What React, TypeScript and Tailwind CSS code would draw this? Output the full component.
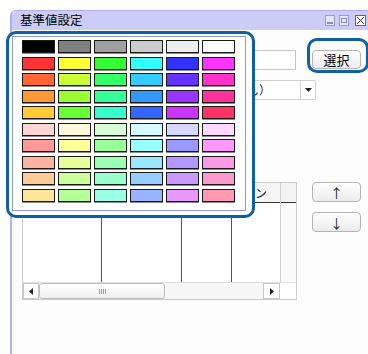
import React from "react";

const palette: string[][] = [
  ["#000000", "#808080", "#a0a0a0", "#cccccc", "#eeeeee", "#ffffff"],
  ["#ff3333", "#ffff33", "#33ff33", "#33ffff", "#3333ff", "#ff33ff"],
  ["#ff6633", "#ccff33", "#33ff66", "#33ccff", "#6633ff", "#ff33cc"],
  ["#ff9933", "#99ff33", "#33ff99", "#3399ff", "#9933ff", "#ff3399"],
  ["#ffcc33", "#66ff33", "#33ffcc", "#3366ff", "#cc33ff", "#ff3366"],
  ["#ffd5d5", "#fffadb", "#d8fbd8", "#d5faff", "#d8d8ff", "#ffd8ff"],
  ["#ff9999", "#ffff99", "#99ff99", "#99ffff", "#9999ff", "#ff99ff"],
  ["#ffb3a0", "#e6ff99", "#99ffb3", "#99e6ff", "#b399ff", "#ff99e6"],
  ["#ffcc99", "#ccff99", "#99ffcc", "#99ccff", "#cc99ff", "#ff99cc"],
  ["#ffe699", "#b3ff99", "#99ffe6", "#99b3ff", "#e699ff", "#ff99b3"],
];

const font = { fontFamily: '"Noto Sans CJK JP", "Noto Sans", sans-serif' };

function WinButton({ children }: { children: React.ReactNode }) {
  return (
    <div className="w-[10px] h-[11px] border border-[#9a9acc] bg-[#e4e5fa] flex items-center justify-center">
      {children}
    </div>
  );
}

export default function App() {
  return (
    <div className="relative w-[368px] h-[354px] overflow-hidden bg-white" style={font}>
      {/* window */}
      <div className="pt-[10px] pl-[10px] h-full">
        <div className="h-full flex flex-col border-l-2 border-t border-[#aeb0ee] rounded-tl-[6px] bg-[#fdfdfd]">
          {/* title bar */}
          <div className="h-[19px] bg-[#cbcdf6] flex items-center pl-[8px] pr-[2px]">
            <span className="text-[12.5px] leading-none text-black">基準値設定</span>
            <div className="ml-auto flex items-center gap-[4px]">
              <WinButton>
                <div className="w-[6px] h-[2px] bg-[#8a8ab8] mt-[4px]" />
              </WinButton>
              <WinButton>
                <div className="w-[6px] h-[5px] border border-[#8a8ab8]" />
              </WinButton>
              <div className="w-[11px] h-[11px] ml-[2px] border border-[#666] bg-white flex items-center justify-center">
                <svg width="9" height="9" viewBox="0 0 9 9">
                  <path d="M1 1L8 8M8 1L1 8" stroke="#333" strokeWidth="1" />
                </svg>
              </div>
            </div>
          </div>

          {/* content */}
          <div className="pl-[10px] flex flex-col">
            <div className="mt-[20px] flex items-start">
              <div className="w-[274px] h-[20px] border border-[#c4c4c4] bg-white" />
              <button className="ml-[16px] w-[49px] h-[19px] rounded-[4px] border border-[#b4b4b4] bg-gradient-to-b from-white to-[#ececec] text-[13px] leading-none text-black flex items-center justify-center">
                選択
              </button>
            </div>

            <div className="mt-[10px] w-[294px] h-[20px] border border-[#cfcfcf] rounded-[2px] bg-white flex items-center">
              <span className="ml-[200px] text-[12px] leading-none text-[#222] whitespace-nowrap">（なし）</span>
              <div className="ml-auto w-[15px] h-full border-l border-[#d4d4d4] flex items-center justify-center">
                <svg width="7" height="4" viewBox="0 0 7 4">
                  <path d="M0 0H7L3.5 4Z" fill="#222" />
                </svg>
              </div>
            </div>

            <div className="mt-[82px] flex items-start">
              {/* table */}
              <div className="w-[275px] h-[118px] border border-[#cacaca] bg-white flex flex-col">
                <div className="flex-1 flex">
                  <div className="w-[258px] flex flex-col border-r border-[#d0d0d0]">
                    <div className="h-[20px] flex bg-[#f5f5f5] border-b border-[#333] text-[12px] leading-none text-[#123]">
                      <div className="w-[79px] border-r border-[#d8d8d8]" />
                      <div className="w-[80px] border-r border-[#d8d8d8]" />
                      <div className="w-[50px] border-r border-[#d8d8d8]" />
                      <div className="flex-1 flex items-center justify-end pr-[13px] whitespace-nowrap">パターン</div>
                    </div>
                    <div className="flex-1 flex">
                      <div className="w-[79px] border-r border-[#555]" />
                      <div className="w-[80px] border-r border-[#555]" />
                      <div className="w-[50px] border-r border-[#555]" />
                      <div className="flex-1" />
                    </div>
                  </div>
                  <div className="flex-1 flex flex-col bg-[#fbfbfb]">
                    <div className="h-[20px] bg-[#f3f3f3] border-b border-[#333]" />
                  </div>
                </div>
                {/* horizontal scrollbar */}
                <div className="h-[17px] flex bg-[#f7f7f7] border-t border-[#e0e0e0]">
                  <div className="w-[16px] h-full border border-[#c8c8c8] bg-white flex items-center justify-center">
                    <svg width="4" height="7" viewBox="0 0 4 7">
                      <path d="M4 0V7L0 3.5Z" fill="#222" />
                    </svg>
                  </div>
                  <div className="w-[126px] h-full rounded-[3px] border border-[#bdbdbd] bg-gradient-to-b from-white to-[#f0f0f0] flex items-center justify-center">
                    <div className="flex gap-[1px]">
                      {[0, 1, 2, 3].map((i) => (
                        <div key={i} className="w-[1px] h-[5px] bg-[#999]" />
                      ))}
                    </div>
                  </div>
                  <div className="flex-1" />
                  <div className="w-[17px] h-full border border-[#c8c8c8] bg-white flex items-center justify-center">
                    <svg width="4" height="7" viewBox="0 0 4 7">
                      <path d="M0 0V7L4 3.5Z" fill="#222" />
                    </svg>
                  </div>
                  <div className="w-[16px] h-full bg-white" />
                </div>
              </div>

              {/* up / down */}
              <div className="ml-[15px] flex flex-col gap-[10px]">
                <button className="w-[49px] h-[20px] rounded-[4px] border border-[#b4b4b4] bg-gradient-to-b from-white to-[#ececec] text-[13px] leading-none text-[#123] flex items-center justify-center">
                  ↑
                </button>
                <button className="w-[49px] h-[20px] rounded-[4px] border border-[#b4b4b4] bg-gradient-to-b from-white to-[#ececec] text-[13px] leading-none text-[#123] flex items-center justify-center">
                  ↓
                </button>
              </div>
            </div>
          </div>
        </div>
      </div>

      {/* highlight around 選択 */}
      <div className="absolute left-[307px] top-[38px] w-[62px] h-[35px] border-[3px] border-[#0f5ea8] rounded-[10px]" />

      {/* colour palette popup */}
      <div className="absolute left-[6px] top-[31px] w-[249px] h-[187px] border-[3px] border-[#0f5ea8] rounded-[10px] bg-white">
        <div className="ml-[3px] mt-[2px] w-[234px] h-[175px] border border-[#8a9ae6] bg-white pl-[9px] pt-[3px]">
          <div className="grid grid-cols-[repeat(6,33px)] gap-x-[3px] gap-y-[3.5px]">
            {palette.flat().map((c, i) => (
              <div
                key={i}
                className="h-[13px] border border-[#1a1a1a] shadow-[0_1px_0_#8a8a8a]"
                style={{ backgroundColor: c }}
              />
            ))}
          </div>
        </div>
      </div>
    </div>
  );
}
